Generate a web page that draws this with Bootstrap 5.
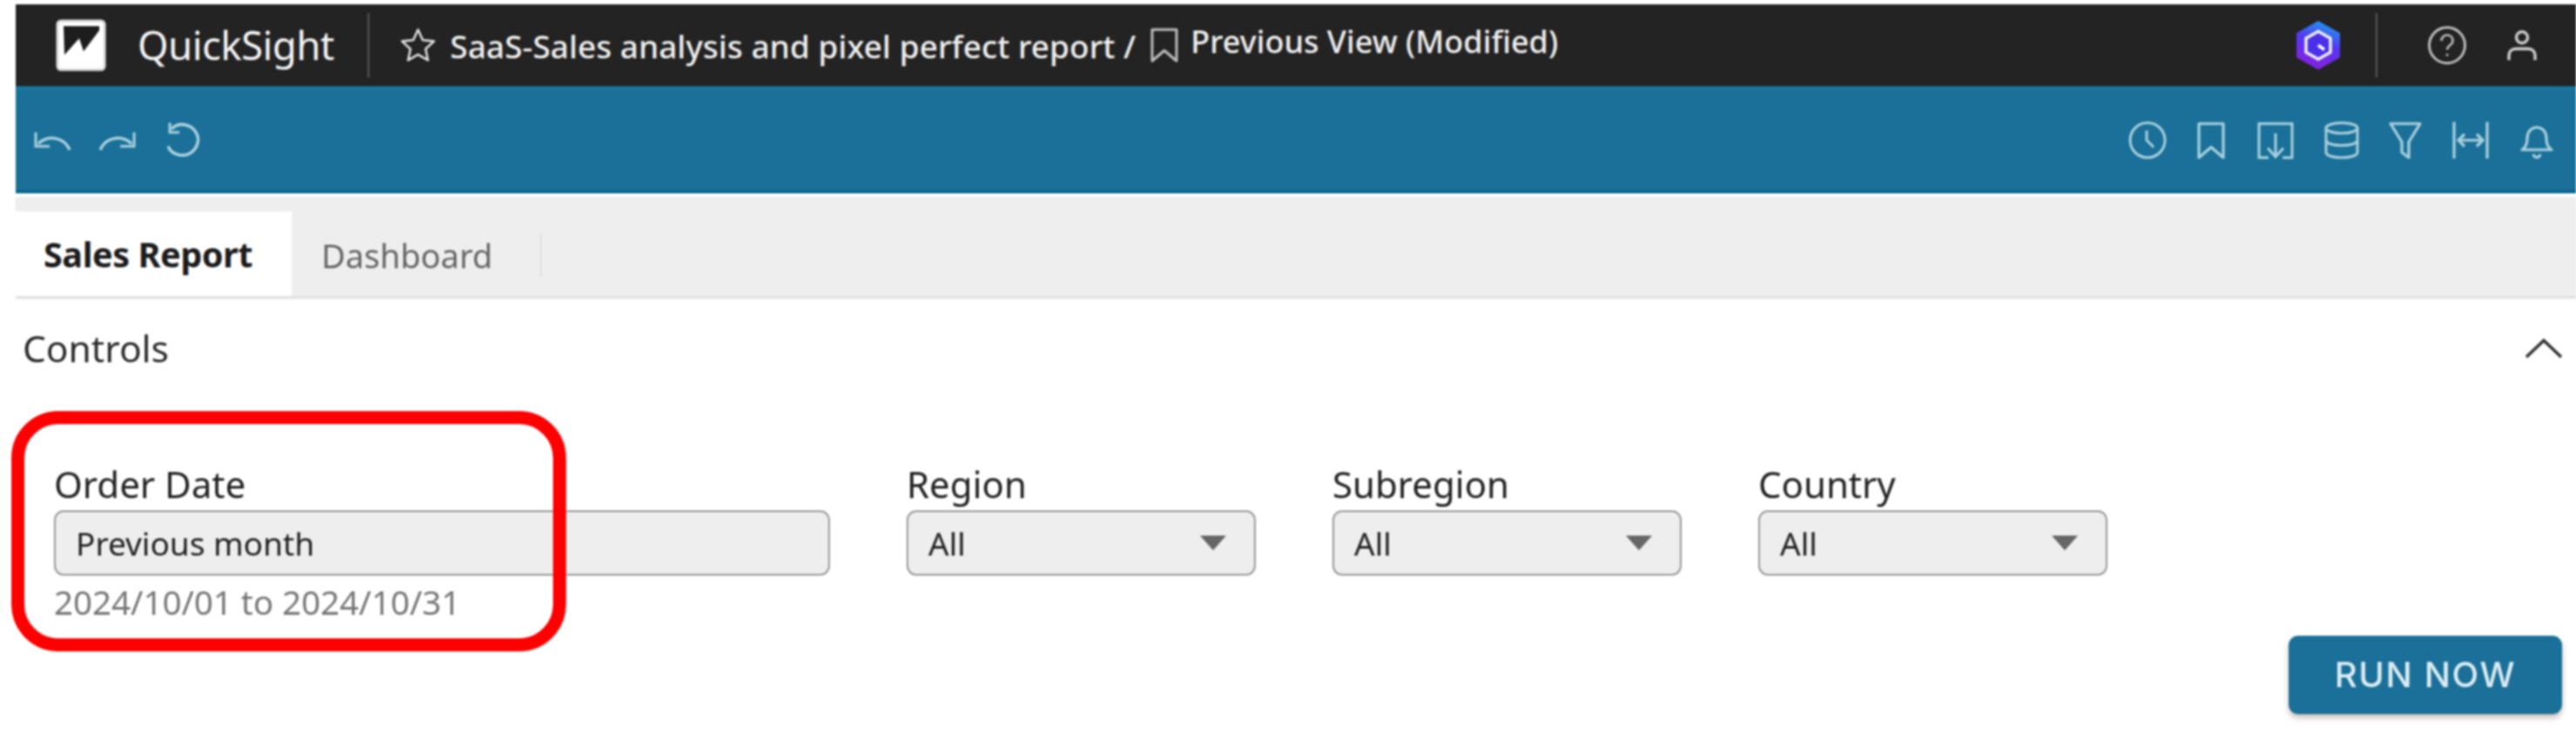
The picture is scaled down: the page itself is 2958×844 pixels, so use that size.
<!DOCTYPE html>
<html lang="en">

<head>
  <meta charset="UTF-8">
  <meta name="viewport" content="width=device-width, initial-scale=1.0">
  <title>QuickSight</title>
  <link href="https://cdn.jsdelivr.net/npm/bootstrap@5.3.2/dist/css/bootstrap.min.css" rel="stylesheet">
  <style>
    body {
      background: #fff;
      font-family: "Noto Sans", "Open Sans", sans-serif;
      color: #222;
      overflow: hidden;
    }

    .app-frame {
      position: relative;
      width: 2958px;
      height: 844px;
      padding: 5px 0 0 18px;
      filter: blur(1px);
    }

    svg {
      display: block;
      flex: none;
    }

    /* top dark bar */
    .qs-header {
      height: 94px;
      background: #232323;
      color: #eee;
      padding: 0 44px 0 46px;
    }

    .qs-brand {
      font-size: 45.5px;
      letter-spacing: -.5px;
      margin-left: 36px;
      line-height: 1;
      color: #f4f4f4;
    }

    .bar-rule {
      width: 2px;
      height: 74px;
      background: #555;
    }

    .qs-title {
      font-size: 37px;
      font-weight: 500;
      line-height: 1;
      white-space: nowrap;
    }

    .qs-title-view {
      font-size: 36px;
      margin-left: 13px;
    }

    /* blue toolbar */
    .qs-toolbar {
      height: 123px;
      background: #1a7099;
      border-top: 4px solid #17789f;
      border-bottom: 4px solid #08678f;
      color: #a9d0de;
      padding: 0 26px 0 20px;
    }

    /* sheet tabs */
    .sheet-strip {
      height: 114px;
      margin-top: 4px;
      background: #eee;
      padding-top: 17px;
      box-shadow: 0 3px 2px #ddd;
    }

    .sheet-tab {
      height: 97px;
      line-height: 1;
      padding-top: 2px;
    }

    .sheet-active {
      margin-left: -18px;
      width: 335px;
      background: #fff;
      color: #1c1c1c;
      font-weight: 700;
      font-size: 39.5px;
      letter-spacing: -.4px;
      padding-left: 50px;
      position: relative;
      z-index: 1;
    }

    .sheet-idle {
      color: #666;
      padding-left: 34px;
      font-size: 38px;
    }

    .sheet-rule {
      width: 2px;
      height: 48px;
      background: #ddd;
      margin-left: 54px;
    }

    /* controls */
    .controls-head {
      padding: 36px 15px 0 8px;
      font-size: 42.5px;
      line-height: 48px;
      color: #2a2a2a;
    }

    .controls-row {
      padding: 111px 0 0 44px;
      gap: 88px;
    }

    .ctl-label {
      font-size: 42px;
      line-height: 42px;
      height: 51px;
      color: #222;
    }

    .ctl-box.form-control {
      height: 75px;
      display: flex;
      align-items: center;
      justify-content: space-between;
      background: #eee;
      border: 2px solid #999;
      border-radius: 11px;
      font-size: 37px;
      line-height: 1;
      color: #222;
      padding: 0 32px 0 23px;
    }

    .ctl-date {
      width: 891px;
    }

    .ctl-drop {
      width: 401px;
    }

    .ctl-hint {
      font-size: 38.5px;
      line-height: 36px;
      margin-top: 12px;
      color: #777;
    }

    .run-btn.btn {
      width: 314px;
      height: 90px;
      background: #1a7099;
      border: 0;
      border-radius: 11px;
      color: #dcecf2;
      font-family: Inter, Roboto, sans-serif;
      font-size: 40px;
      font-weight: 500;
      letter-spacing: 1.6px;
      padding: 0;
      box-shadow: 0 4px 6px rgba(90, 60, 50, .35);
    }

    .run-wrap {
      padding-right: 16px;
      margin-top: 21px;
    }

    /* the red marker drawn on top of the screenshot */
    .red-marker {
      position: absolute;
      left: 13px;
      top: 472px;
      width: 637px;
      height: 276px;
      border: 15px solid #f00;
      border-radius: 54px;
    }
  </style>
</head>

<body>
  <div class="app-frame">
    <header class="qs-header d-flex align-items-center">
      <svg width="58" height="60" viewBox="0 0 58 60">
        <rect x="2" y="2" width="54" height="56" rx="4" fill="#fff" stroke="#ddd" stroke-width="3" />
        <path d="M9 8h41v5L32 37 27 22 10 41z" fill="#1d1d1d" />
      </svg>
      <div class="qs-brand">QuickSight</div>
      <div class="bar-rule" style="margin-left:38px"></div>
      <svg width="42" height="42" viewBox="0 0 42 42" fill="none" stroke="#ddd" stroke-width="2.6" stroke-linejoin="round" style="margin-left:35px">
        <path d="M21 3l5.4 12 13 1.4-9.7 8.8 2.7 13L21 31.600 9.600 38.200l2.700-13L2.600 16.400l13-1.400z" />
      </svg>
      <div class="qs-title" style="margin-left:16px">SaaS-Sales analysis and pixel perfect report /</div>
      <svg class="ms-3" width="34" height="42" viewBox="0 0 34 42" fill="none" stroke="#bbb" stroke-width="3" stroke-linejoin="round">
        <path d="M3 3h28v36L17 27 3 39z" />
      </svg>
      <div class="qs-title qs-title-view pb-2">Previous View (Modified)</div>
      <svg class="ms-auto" width="54" height="58" viewBox="0 0 54 58">
        <defs>
          <linearGradient id="hexFill" x1="0.7" y1="0" x2="0.4" y2="1">
            <stop offset="0" stop-color="#1c9df0" />
            <stop offset=".45" stop-color="#5438f0" />
            <stop offset="1" stop-color="#8a1fe0" />
          </linearGradient>
        </defs>
        <path d="M27 1l25 14v28L27 57 2 43V15z" fill="url(#hexFill)" />
        <path d="M27 13l14 8v16l-14 8-14-8V21z" fill="#4a30e8" stroke="#eee" stroke-width="3.500" />
        <path d="M27 29l7 5" stroke="#fff" stroke-width="3.500" />
      </svg>
      <div class="bar-rule" style="margin-left:39px"></div>
      <svg width="46" height="46" viewBox="0 0 46 46" fill="none" stroke="#bbb" stroke-width="3" style="margin-left:57px">
        <circle cx="23" cy="23" r="20.500" />
        <path d="M16.500 18c0-9 13-9 13 0 0 5-6.500 5-6.500 10" stroke-width="2.600" />
        <circle cx="23" cy="34" r="1.500" fill="#bbb" stroke="none" />
      </svg>
      <svg width="36" height="36" viewBox="0 0 36 36" fill="none" stroke="#ccc" stroke-width="3.400" style="margin-left:45px">
        <circle cx="18" cy="9" r="6.500" />
        <path d="M3 35v-5c0-5 3-8 8-8h14c5 0 8 3 8 8v5" />
      </svg>
    </header>

    <div class="qs-toolbar d-flex align-items-center justify-content-between">
      <div class="d-flex align-items-center">
        <svg width="44" height="26" viewBox="0 0 44 26" fill="none" stroke="#a9d0de" stroke-width="3.500">
          <path d="M42 24C36 10 18 6 6 17" />
          <path d="M3 4v16h16" stroke-width="3" />
        </svg>
        <svg width="44" height="26" viewBox="0 0 44 26" fill="none" stroke="#a9d0de" stroke-width="3.500" style="margin-left:31px">
          <path d="M2 24C8 10 26 6 38 17" />
          <path d="M41 4v16H25" stroke-width="3" />
        </svg>
        <svg width="42" height="44" viewBox="0 0 42 44" fill="none" stroke="#a9d0de" stroke-width="3.500" style="margin-left:32px">
          <path d="M8 9c5-5 12-6 18-4 9 3 14 12 12 20-2 9-11 16-21 14C11 38 6 34 4 29" />
          <path d="M6 2v11h11" stroke-width="3" />
        </svg>
      </div>
      <div class="d-flex align-items-center gap-4 toolbar-right">
        <svg width="44" height="44" viewBox="0 0 44 44" fill="none" stroke="currentColor" stroke-width="3">
          <circle cx="22" cy="22" r="20" />
          <path d="M21 11v11l8 8" />
        </svg>
        <svg width="34" height="44" viewBox="0 0 34 44" fill="none" stroke="currentColor" stroke-width="3.200" stroke-linejoin="round" style="margin-left:10px">
          <path d="M3 3h28v39L17 30 3 42z" />
        </svg>
        <svg width="44" height="44" viewBox="0 0 44 44" fill="none" stroke="currentColor" stroke-width="3" style="margin-left:11px">
          <path d="M14 42H3V3h38v39H30" />
          <path d="M22 14v26M13 31l9 10 9-10" />
        </svg>
        <svg width="42" height="44" viewBox="0 0 42 44" fill="none" stroke="currentColor" stroke-width="3" style="margin-left:9px">
          <ellipse cx="21" cy="8" rx="18" ry="6" />
          <path d="M3 8v28c0 8 36 8 36 0V8M3 22c0 8 36 8 36 0" />
        </svg>
        <svg width="38" height="44" viewBox="0 0 38 44" fill="none" stroke="currentColor" stroke-width="3.200" stroke-linejoin="round" style="margin-left:9px">
          <path d="M2 3h34L23 24v18l-8-6V24z" />
        </svg>
        <svg width="44" height="44" viewBox="0 0 44 44" fill="none" stroke="currentColor" stroke-width="3.200" style="margin-left:10px">
          <path d="M3 1v42M41 1v42M8 22h28" />
          <path d="M15 15l-7 7 7 7M29 15l7 7-7 7" />
        </svg>
        <svg width="38" height="44" viewBox="0 0 38 44" fill="none" stroke="currentColor" stroke-width="3.200" stroke-linejoin="round" style="margin-left:11px">
          <path d="M2 33c5-3 6-7 6-13C8 3 30 3 30 20c0 6 1 10 6 13z" />
          <path d="M15 38c1 5 7 5 8 0" />
        </svg>
      </div>
    </div>

    <div class="sheet-strip d-flex">
      <div class="sheet-tab sheet-active d-flex align-items-center">Sales Report</div>
      <div class="sheet-tab sheet-idle d-flex align-items-center">Dashboard
        <div class="sheet-rule"></div>
      </div>
    </div>

    <div class="controls-head d-flex align-items-center justify-content-between">
      <div>Controls</div>
      <svg width="44" height="24" viewBox="0 0 44 24" fill="none" stroke="#333" stroke-width="3.500">
        <path d="M2 22L22 3l20 19" />
      </svg>
    </div>

    <div class="controls-row d-flex align-items-start">
      <div class="ctl-date">
        <div class="ctl-label">Order Date</div>
        <div class="ctl-box form-control">Previous month</div>
        <div class="ctl-hint">2024/10/01 to 2024/10/31</div>
      </div>
      <div class="ctl-drop">
        <div class="ctl-label">Region</div>
        <div class="ctl-box form-control">All
          <svg width="30" height="17" viewBox="0 0 30 17"><path d="M0 0h30L15 17z" fill="#666" /></svg>
        </div>
      </div>
      <div class="ctl-drop">
        <div class="ctl-label">Subregion</div>
        <div class="ctl-box form-control">All
          <svg width="30" height="17" viewBox="0 0 30 17"><path d="M0 0h30L15 17z" fill="#666" /></svg>
        </div>
      </div>
      <div class="ctl-drop">
        <div class="ctl-label">Country</div>
        <div class="ctl-box form-control">All
          <svg width="30" height="17" viewBox="0 0 30 17"><path d="M0 0h30L15 17z" fill="#666" /></svg>
        </div>
      </div>
    </div>

    <div class="run-wrap d-flex justify-content-end">
      <button type="button" class="run-btn btn">RUN NOW</button>
    </div>

    <div class="red-marker"></div>
  </div>

  <script src="https://cdn.jsdelivr.net/npm/bootstrap@5.3.2/dist/js/bootstrap.bundle.min.js"></script>
</body>

</html>
